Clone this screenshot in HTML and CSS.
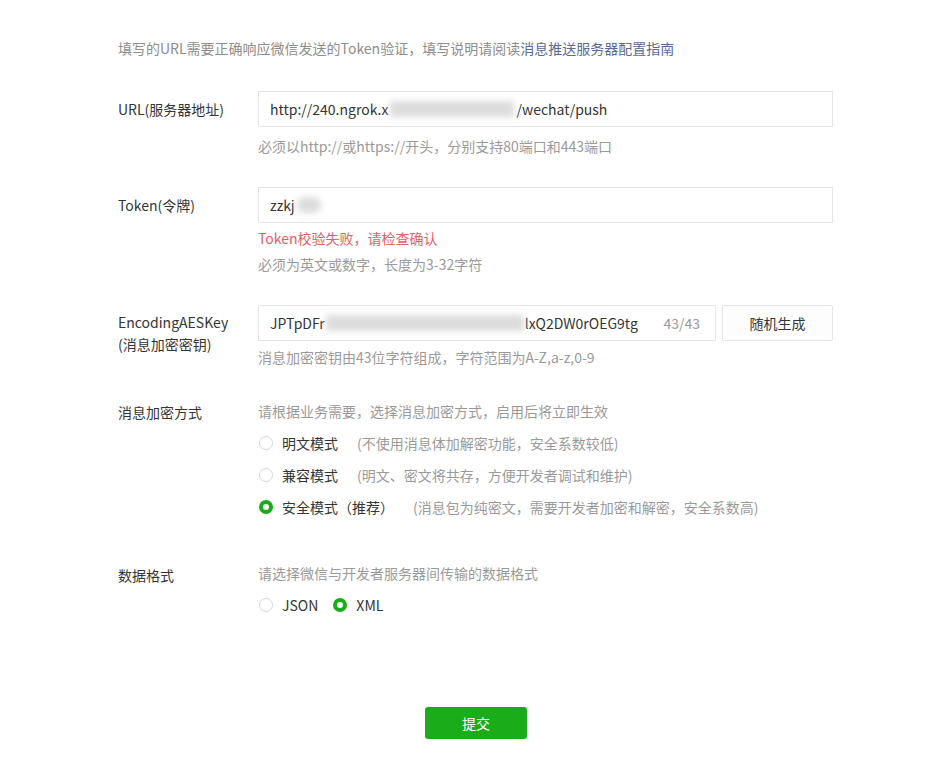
FILE: index.html
```html
<!DOCTYPE html>
<html>
  <head>
    <title>服务器配置</title>
    <meta charset="UTF-8" />
    <link rel="stylesheet" href="styles.css">
  </head>

  <body>
    <div class="page">
      <p class="intro">填写的URL需要正确响应微信发送的Token验证，填写说明请阅读<a class="link" href="#">消息推送服务器配置指南</a></p>

      <!-- url -->
      <div class="row row_url">
        <label class="label">URL(服务器地址)</label>
        <div class="field">
          <div class="input">http://240.ngrok.x<span class="mask mask_url"></span>/wechat/push</div>
          <p class="tips tips_first">必须以http://或https://开头，分别支持80端口和443端口</p>
        </div>
      </div>

      <!-- token -->
      <div class="row">
        <label class="label">Token(令牌)</label>
        <div class="field">
          <div class="input">zzkj<span class="mask mask_token"></span></div>
          <p class="error">Token校验失败，请检查确认</p>
          <p class="tips">必须为英文或数字，长度为3-32字符</p>
        </div>
      </div>

      <!-- aes key -->
      <div class="row">
        <label class="label label_two">EncodingAESKey<br>(消息加密密钥)</label>
        <div class="field">
          <div class="key_line">
            <div class="input input_key">JPTpDFr<span class="mask mask_key"></span>lxQ2DW0rOEG9tg<span class="counter">43/43</span></div>
            <button class="btn">随机生成</button>
          </div>
          <p class="tips">消息加密密钥由43位字符组成，字符范围为A-Z,a-z,0-9</p>
        </div>
      </div>

      <!-- encrypt mode -->
      <div class="row row_mode">
        <label class="label label_plain">消息加密方式</label>
        <div class="field">
          <p class="tips tips_head">请根据业务需要，选择消息加密方式，启用后将立即生效</p>
          <div class="radio"><span class="dot"></span><span class="radio_text">明文模式</span><span class="radio_desc">(不使用消息体加解密功能，安全系数较低)</span></div>
          <div class="radio"><span class="dot"></span><span class="radio_text">兼容模式</span><span class="radio_desc">(明文、密文将共存，方便开发者调试和维护)</span></div>
          <div class="radio"><span class="dot dot_on"></span><span class="radio_text">安全模式（推荐）</span><span class="radio_desc">(消息包为纯密文，需要开发者加密和解密，安全系数高)</span></div>
        </div>
      </div>

      <!-- data format -->
      <div class="row row_format">
        <label class="label label_plain">数据格式</label>
        <div class="field">
          <p class="tips tips_head">请选择微信与开发者服务器间传输的数据格式</p>
          <div class="radio_group">
            <div class="radio"><span class="dot"></span><span class="radio_text">JSON</span></div>
            <div class="radio"><span class="dot dot_on"></span><span class="radio_text">XML</span></div>
          </div>
        </div>
      </div>

      <div class="submit_bar">
        <button class="submit">提交</button>
      </div>
    </div>
  </body>
</html>
```

FILE: styles.css
```css
html {
  background: #fff;
}
body {
  margin: 0;
  font-family: "Noto Sans CJK SC", "Noto Sans", sans-serif;
  font-size: 14px;
  color: #353535;
}
p {
  margin: 0;
}
.page {
  width: 948px;
  padding: 38px 0 0 118px;
  box-sizing: border-box;
}
.intro {
  line-height: 20px;
  color: #8d8d8d;
}
.link {
  color: #576b95;
  text-decoration: none;
}
.row {
  display: grid;
  grid-template-columns: 140px 575px;
  margin-top: 31px;
}
.row_url {
  margin-top: 33px;
}
.row_mode {
  margin-top: 34px;
}
.row_format {
  margin-top: 40px;
}
.label {
  line-height: 36px;
  color: #353535;
}
.label_two {
  line-height: 22px;
  padding-top: 6px;
}
.label_plain {
  line-height: 20px;
  padding-top: 1px;
}
.row_format .label_plain {
  padding-top: 2px;
}
.input {
  height: 36px;
  box-sizing: border-box;
  border: 1px solid #e4e4e9;
  padding: 0 11px;
  line-height: 34px;
  display: flex;
  align-items: center;
  color: #353535;
}
.mask {
  display: inline-block;
  height: 16px;
  background: #dcdcdc;
  filter: blur(3px);
}
.mask_url {
  width: 124px;
  margin: 0 2px;
}
.mask_token {
  width: 24px;
  border-radius: 8px;
  margin-left: 2px;
}
.mask_key {
  width: 198px;
  margin: 0 1px;
}
.key_line {
  display: flex;
  gap: 6px;
}
.input_key {
  flex: 1;
  padding-right: 15px;
}
.counter {
  margin-left: auto;
  color: #9a9a9a;
}
.btn {
  width: 111px;
  height: 36px;
  border: 1px solid #e4e4e9;
  background: #fdfdfd;
  font-family: inherit;
  font-size: 14px;
  color: #353535;
  border-radius: 2px;
}
.tips {
  line-height: 20px;
  margin-top: 6px;
  color: #9a9a9a;
}
.tips_first {
  margin-top: 9px;
}
.tips_head {
  margin-top: 0;
}
.error {
  line-height: 20px;
  margin-top: 5px;
  color: #e15f63;
}
.radio {
  display: flex;
  align-items: center;
  height: 32px;
}
.row_mode .radio:first-of-type {
  margin-top: 6px;
}
.radio_group {
  display: flex;
  gap: 14px;
  margin-top: 6px;
}
.dot {
  width: 14px;
  height: 14px;
  box-sizing: border-box;
  border: 1px solid #d6d6d6;
  border-radius: 50%;
  margin-left: 1px;
  margin-right: 9px;
}
.dot_on {
  border: 4px solid #1aad19;
}
.radio_text {
  color: #353535;
}
.radio_desc {
  margin-left: 19px;
  color: #9a9a9a;
}
.submit_bar {
  width: 716px;
  display: flex;
  justify-content: center;
  margin-top: 86px;
}
.submit {
  width: 102px;
  height: 32px;
  border: 0;
  border-radius: 3px;
  background: #1aad19;
  color: #fff;
  font-family: inherit;
  font-size: 14px;
}
```
